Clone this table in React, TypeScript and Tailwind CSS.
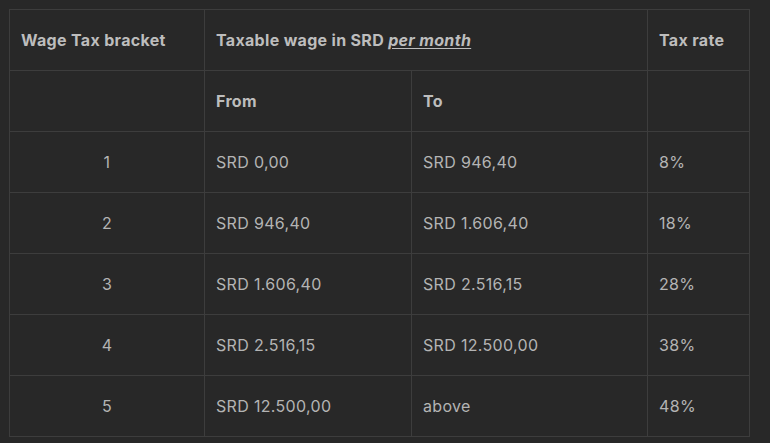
import { type FC } from 'react';

const rows = [
  { bracket: '1', from: 'SRD 0,00', to: 'SRD 946,40', rate: '8%' },
  { bracket: '2', from: 'SRD 946,40', to: 'SRD 1.606,40', rate: '18%' },
  { bracket: '3', from: 'SRD 1.606,40', to: 'SRD 2.516,15', rate: '28%' },
  { bracket: '4', from: 'SRD 2.516,15', to: 'SRD 12.500,00', rate: '38%' },
  { bracket: '5', from: 'SRD 12.500,00', to: 'above', rate: '48%' },
];

const cell = 'border border-[#3d3d3d] h-[61px] px-[11px] align-middle';

const App: FC = () => {
  return (
    <div className="min-h-[443px] w-[770px] bg-[#282828] pt-[9px] pl-[9px] font-['Inter',sans-serif] text-[16px] tracking-[0.02em] text-[#b4b4b4]">
      <table className="border-collapse table-fixed w-[740px]">
        <colgroup>
          <col className="w-[195px]" />
          <col className="w-[207px]" />
          <col className="w-[236px]" />
          <col className="w-[102px]" />
        </colgroup>
        <thead className="font-extrabold text-[#bdbdbd]">
          <tr>
            <th className={`${cell} text-left`}>Wage Tax bracket</th>
            <th colSpan={2} className={`${cell} text-left`}>
              Taxable wage in SRD <em className="underline underline-offset-2 pr-1">per month</em>
            </th>
            <th className={`${cell} text-left`}>Tax rate</th>
          </tr>
          <tr>
            <th className={cell} />
            <th className={`${cell} text-left`}>From</th>
            <th className={`${cell} text-left`}>To</th>
            <th className={cell} />
          </tr>
        </thead>
        <tbody>
          {rows.map((r) => (
            <tr key={r.bracket}>
              <td className={`${cell} text-center`}>{r.bracket}</td>
              <td className={cell}>{r.from}</td>
              <td className={cell}>{r.to}</td>
              <td className={cell}>{r.rate}</td>
            </tr>
          ))}
        </tbody>
      </table>
    </div>
  );
};

export default App;
